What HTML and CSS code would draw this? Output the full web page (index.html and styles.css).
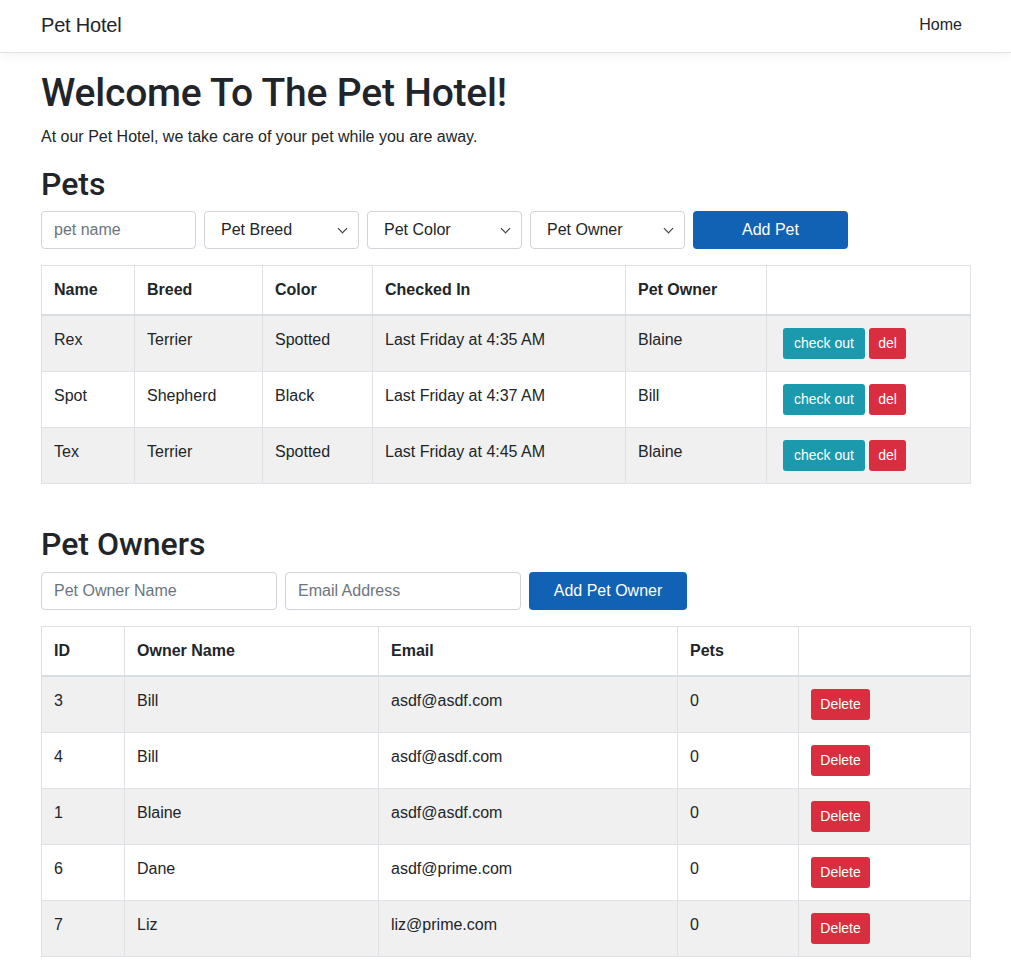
FILE: index.html
```html
<!DOCTYPE html>
<html lang="en">
<head>
<meta charset="utf-8">
<title>Pet Hotel</title>
<link rel="stylesheet" href="styles.css">
</head>
<body>
<nav class="navbar">
  <div class="nav-inner">
    <span class="brand">Pet Hotel</span>
    <span class="nav-link">Home</span>
  </div>
</nav>
<main class="container">
  <h1 class="title">Welcome To The Pet Hotel!</h1>
  <p class="lead">At our Pet Hotel, we take care of your pet while you are away.</p>

  <section class="section">
    <h2 class="heading">Pets</h2>
    <div class="form-row">
      <input class="control w-155" placeholder="pet name">
      <div class="select w-155">Pet Breed<span class="caret"></span></div>
      <div class="select w-155">Pet Color<span class="caret"></span></div>
      <div class="select w-155">Pet Owner<span class="caret"></span></div>
      <button class="btn btn-primary w-155">Add Pet</button>
    </div>
    <table class="table pets">
      <colgroup>
        <col class="c1"><col class="c2"><col class="c3"><col class="c4"><col class="c5"><col>
      </colgroup>
      <thead>
        <tr><th>Name</th><th>Breed</th><th>Color</th><th>Checked In</th><th>Pet Owner</th><th></th></tr>
      </thead>
      <tbody>
        <tr><td>Rex</td><td>Terrier</td><td>Spotted</td><td>Last Friday at 4:35 AM</td><td>Blaine</td><td><span class="btn-sm btn-info">check out</span><span class="btn-sm btn-danger">del</span></td></tr>
        <tr><td>Spot</td><td>Shepherd</td><td>Black</td><td>Last Friday at 4:37 AM</td><td>Bill</td><td><span class="btn-sm btn-info">check out</span><span class="btn-sm btn-danger">del</span></td></tr>
        <tr><td>Tex</td><td>Terrier</td><td>Spotted</td><td>Last Friday at 4:45 AM</td><td>Blaine</td><td><span class="btn-sm btn-info">check out</span><span class="btn-sm btn-danger">del</span></td></tr>
      </tbody>
    </table>
  </section>

  <section class="section owners">
    <h2 class="heading">Pet Owners</h2>
    <div class="form-row">
      <input class="control w-236" placeholder="Pet Owner Name">
      <input class="control w-236" placeholder="Email Address">
      <button class="btn btn-primary w-158">Add Pet Owner</button>
    </div>
    <table class="table owners-table">
      <colgroup>
        <col class="o1"><col class="o2"><col class="o3"><col class="o4"><col>
      </colgroup>
      <thead>
        <tr><th>ID</th><th>Owner Name</th><th>Email</th><th>Pets</th><th></th></tr>
      </thead>
      <tbody>
        <tr><td>3</td><td>Bill</td><td>asdf@asdf.com</td><td>0</td><td><span class="btn-sm btn-danger">Delete</span></td></tr>
        <tr><td>4</td><td>Bill</td><td>asdf@asdf.com</td><td>0</td><td><span class="btn-sm btn-danger">Delete</span></td></tr>
        <tr><td>1</td><td>Blaine</td><td>asdf@asdf.com</td><td>0</td><td><span class="btn-sm btn-danger">Delete</span></td></tr>
        <tr><td>6</td><td>Dane</td><td>asdf@prime.com</td><td>0</td><td><span class="btn-sm btn-danger">Delete</span></td></tr>
        <tr><td>7</td><td>Liz</td><td>liz@prime.com</td><td>0</td><td><span class="btn-sm btn-danger">Delete</span></td></tr>
      </tbody>
    </table>
  </section>
</main>
</body>
</html>
```

FILE: styles.css
```css
* { box-sizing: border-box; }

html, body {
  margin: 0;
  padding: 0;
  background: #fff;
  color: #212529;
  font-family: "Liberation Sans", Arial, sans-serif;
  font-size: 16px;
  line-height: 1.5;
}

.navbar {
  height: 53px;
  border-bottom: 1px solid #dee2e6;
  box-shadow: 0 2px 12px rgba(0, 0, 0, 0.06);
  background: #fff;
}

.nav-inner {
  width: 930px;
  margin-left: 41px;
  height: 100%;
  display: flex;
  align-items: center;
  justify-content: space-between;
}

.brand {
  font-size: 20px;
  color: #212529;
  position: relative;
  top: -1px;
  letter-spacing: -0.2px;
}

.nav-link {
  font-size: 16px;
  padding: 0 9px 0 8px;
  color: #212529;
  position: relative;
  top: -1px;
}

.container {
  width: 930px;
  margin-left: 41px;
  padding-top: 16px;
  padding-bottom: 20px;
}

.title {
  font-family: Roboto, "Liberation Sans", sans-serif;
  font-size: 39px;
  font-weight: 500;
  line-height: 48px;
  margin: 0 0 8px;
  letter-spacing: -0.2px;
}

.lead {
  margin: 0 0 16px;
  font-size: 16px;
  line-height: 24px;
}

.heading {
  font-family: Roboto, "Liberation Sans", sans-serif;
  font-size: 32px;
  font-weight: 500;
  line-height: 1.2;
  margin: 0 0 8px;
}

.owners { margin-top: 41px; }

.form-row {
  display: flex;
  gap: 8px;
  margin-bottom: 16px;
}

.w-155 { width: 155px; }
.w-236 { width: 236px; }
.w-158 { width: 158px; }

.control, .select {
  height: 38px;
  border: 1px solid #ced4da;
  border-radius: 4px;
  background: #fff;
  font-family: inherit;
  font-size: 16px;
  color: #212529;
  padding: 0 12px;
  outline: none;
}

.control::placeholder { color: #6c757d; opacity: 1; }

.select {
  display: flex;
  align-items: center;
  justify-content: space-between;
  padding: 0 12px 0 16px;
}

.caret {
  width: 7px;
  height: 7px;
  border-right: 1.6px solid #333;
  border-bottom: 1.6px solid #333;
  transform: rotate(45deg);
  margin-top: -3px;
}

.btn {
  height: 38px;
  border: none;
  border-radius: 4px;
  font-family: inherit;
  font-size: 16px;
  color: #fff;
  padding: 0 12px;
}

.btn-primary { background: #1162b5; }

.table {
  width: 930px;
  border-collapse: collapse;
  table-layout: fixed;
  margin-bottom: 16px;
}

.table th, .table td {
  border: 1px solid #dee2e6;
  padding: 12px 12px 11px;
  text-align: left;
  vertical-align: top;
  font-size: 16px;
  line-height: 24px;
}

.table th { font-weight: 700; padding-bottom: 12px; }

.table thead tr th { border-bottom: 2px solid #d8dde2; }

.table tbody tr:nth-child(odd) td { background: #f0f0f0; }

.table td:last-child { padding-top: 12px; padding-bottom: 12px; }
.pets td:last-child { padding-left: 16px; }
.owners-table td:last-child { padding-left: 12px; }

.pets .c1 { width: 93px; }
.pets .c2 { width: 128px; }
.pets .c3 { width: 110px; }
.pets .c4 { width: 253px; }
.pets .c5 { width: 141px; }

.owners-table .o1 { width: 83px; }
.owners-table .o2 { width: 254px; }
.owners-table .o3 { width: 299px; }
.owners-table .o4 { width: 121px; }

.btn-sm {
  display: inline-block;
  height: 31px;
  line-height: 31px;
  padding: 0;
  font-size: 14px;
  color: #fff;
  border-radius: 3px;
  vertical-align: top;
  text-align: center;
}

.btn-info { background: #1b9aae; width: 82px; margin-right: 4px; }
.btn-danger { background: #d92d40; }
.pets .btn-danger { width: 37px; }
.owners-table .btn-danger { width: 59px; }
```
